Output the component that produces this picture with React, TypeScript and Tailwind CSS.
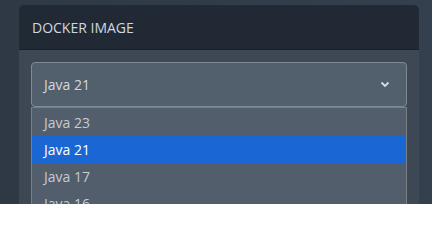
import React from "react";

export default function App() {
  const items = ["Java 23", "Java 21", "Java 17", "Java 16"];
  return (
    <div
      className="w-[432px] h-[204px] overflow-hidden bg-gradient-to-r from-[#2e3945] to-[#34404d] pt-[5px] pl-[19px]"
      style={{ fontFamily: '"Open Sans", "Noto Sans", sans-serif' }}
    >
      <div className="w-[400px] h-[260px] rounded-t-[5px] bg-[#3d4854] overflow-hidden">
        <div className="h-[45px] bg-[#212a34] border-b border-[#1a2029] flex items-center px-[13px] text-[14px] text-[#cfd8e1]">
          DOCKER IMAGE
        </div>
        <div className="px-[12px] pt-[12px]">
          <div className="h-[45px] rounded-[4px] border border-[#7f8a96] bg-[#525f6c] flex items-center justify-between pl-[12px] pr-[16px] text-[14px] text-[#d3d9df]">
            <span>Java 21</span>
            <svg width="10" height="7" viewBox="0 0 10 7" fill="none">
              <path d="M1.5 1.5 L5 5 L8.5 1.5" stroke="#d6dce2" strokeWidth="1.8" />
            </svg>
          </div>
          <div className="border-x border-t border-[#7a7f86] bg-[#525e6b] pt-[1px]">
            {items.map((it) => (
              <div
                key={it}
                className={
                  it === "Java 21"
                    ? "h-[27px] flex items-center pl-[12px] text-[14px] bg-[#1a67d3] text-white"
                    : "h-[27px] flex items-center pl-[12px] text-[14px] text-[#c5cbd2]"
                }
              >
                {it}
              </div>
            ))}
          </div>
        </div>
      </div>
    </div>
  );
}
